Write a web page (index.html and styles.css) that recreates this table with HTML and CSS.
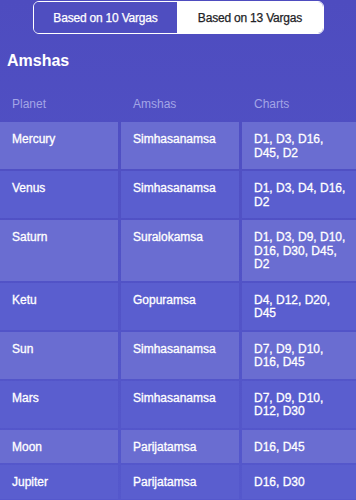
FILE: index.html
```html
<!DOCTYPE html>
<html>
<head>
<meta charset="utf-8">
<link rel="stylesheet" href="styles.css">
</head>
<body>
<div class="page">
  <div class="segmented">
    <div class="seg seg-active">Based on 10 Vargas</div>
    <div class="seg seg-inactive">Based on 13 Vargas</div>
  </div>
  <h1 class="title">Amshas</h1>
  <div class="head-row">
    <div class="head-cell">Planet</div>
    <div class="head-cell">Amshas</div>
    <div class="head-cell">Charts</div>
  </div>
  <div class="table">
    <div class="cell odd">Mercury</div><div class="cell odd">Simhasanamsa</div><div class="cell odd">D1, D3, D16, D45, D2</div>
    <div class="cell even">Venus</div><div class="cell even">Simhasanamsa</div><div class="cell even">D1, D3, D4, D16, D2</div>
    <div class="cell odd">Saturn</div><div class="cell odd">Suralokamsa</div><div class="cell odd">D1, D3, D9, D10, D16, D30, D45, D2</div>
    <div class="cell even">Ketu</div><div class="cell even">Gopuramsa</div><div class="cell even">D4, D12, D20, D45</div>
    <div class="cell odd">Sun</div><div class="cell odd">Simhasanamsa</div><div class="cell odd">D7, D9, D10, D16, D45</div>
    <div class="cell even">Mars</div><div class="cell even">Simhasanamsa</div><div class="cell even">D7, D9, D10, D12, D30</div>
    <div class="cell odd">Moon</div><div class="cell odd">Parijatamsa</div><div class="cell odd">D16, D45</div>
    <div class="cell even">Jupiter</div><div class="cell even">Parijatamsa</div><div class="cell even">D16, D30</div>
  </div>
</div>
</body>
</html>
```

FILE: styles.css
```css
* { box-sizing: border-box; }
html, body {
  margin: 0;
  padding: 0;
}
body {
  width: 356px;
  height: 500px;
  overflow: hidden;
  background: linear-gradient(180deg, #4e4cbf 0%, #5152c6 50%, #5558cc 100%);
  font-family: "Liberation Sans", Arial, sans-serif;
  color: #ffffff;
}
.page {
  display: flex;
  flex-direction: column;
}
.segmented {
  margin: 1px 0 0 33px;
  width: 291px;
  height: 33px;
  display: flex;
  border: 1px solid #ffffff;
  border-radius: 6px;
  overflow: hidden;
}
.seg {
  display: flex;
  align-items: center;
  justify-content: center;
  font-size: 12px;
  letter-spacing: -0.2px;
  -webkit-text-stroke: 0.25px currentColor;
}
.seg-active {
  width: 143px;
  background: #4f4ec0;
  color: #ffffff;
}
.seg-inactive {
  flex: 1;
  background: #ffffff;
  color: #222226;
}
.title {
  margin: 17px 0 0 7px;
  font-size: 16px;
  line-height: 20px;
  font-weight: bold;
}
.head-row {
  margin-top: 26px;
  display: grid;
  grid-template-columns: 118px 118px 1fr;
  column-gap: 3px;
}
.head-cell {
  padding-left: 12px;
  font-size: 12px;
  line-height: 14px;
  color: #a3a5e6;
}
.table {
  margin-top: 11px;
  display: grid;
  grid-template-columns: 118px 118px 1fr;
  column-gap: 3px;
  row-gap: 2px;
}
.cell {
  padding: 11px 4px 9px 12px;
  font-size: 12px;
  line-height: 13.5px;
  -webkit-text-stroke: 0.3px currentColor;
}
.odd { background: #6a6dd1; }
.even { background: #5a5ecf; }
```
